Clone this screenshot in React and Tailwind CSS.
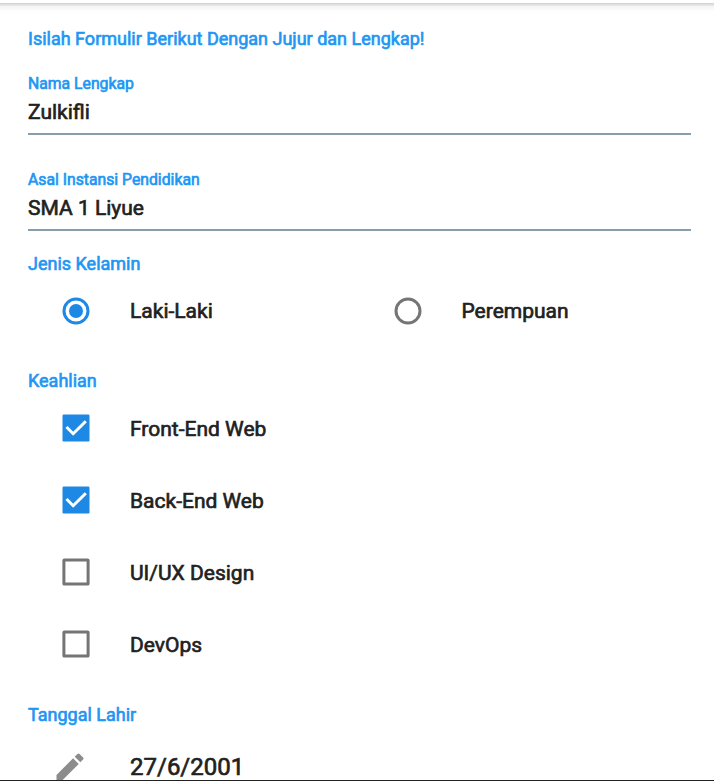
const font = "font-['Roboto',sans-serif]";

function Label({ children, className = "" }) {
  return <div className={`whitespace-nowrap text-[#2196f3] ${className}`}>{children}</div>;
}

function Field({ label, value }) {
  return (
    <div className="h-[62px] border-b-2 border-[#879da9]">
      <Label className="h-[22px] text-[15.75px] leading-[22px]">{label}</Label>
      <div className="pt-[3px] text-[21px] leading-[28px]">{value}</div>
    </div>
  );
}

function Radio({ label, checked }) {
  return (
    <div className="flex w-1/2 items-center">
      <svg className="ml-[30px] h-9 w-9 shrink-0" viewBox="0 0 36 36">
        <circle cx="18" cy="18" r="12" fill="none" stroke={checked ? "#1e88e5" : "#757575"} strokeWidth="3" />
        {checked && <circle cx="18" cy="18" r="7" fill="#1e88e5" />}
      </svg>
      <span className="ml-9 text-[21px] leading-7">{label}</span>
    </div>
  );
}

function Check({ label, checked }) {
  return (
    <div className="flex h-[72px] items-center">
      <svg className="mb-[2px] ml-[30px] h-9 w-9 shrink-0" viewBox="0 0 36 36">
        {checked ? (
          <>
            <rect x="4.500" y="4.500" width="27" height="27" rx="1.200" fill="#1e88e5" />
            <path d="M8.500 17l6.700 6.700L27.800 11.200" fill="none" stroke="white" strokeWidth="3" />
          </>
        ) : (
          <rect x="5.900" y="5.900" width="24.200" height="24.200" rx="0.400" fill="none" stroke="#757575" strokeWidth="3" />
        )}
      </svg>
      <span className="ml-9 text-[21px] leading-7">{label}</span>
    </div>
  );
}

export default function App() {
  return (
    <div className={`h-[781px] w-[714px] overflow-hidden border-b border-[#222] bg-white text-[#212121] font-normal [-webkit-text-stroke:0.650px_currentColor] ${font}`}>
      <div className="h-[3px] bg-white" />
      <div className="h-[9px] bg-linear-to-b from-[#d0d0d0] via-[#f5f5f5] via-40% to-white" />
      <main className="pl-7 pr-[23px] pt-[15px]">
        <Label className="h-[46px] text-[18px] leading-6">Isilah Formulir Berikut Dengan Jujur dan Lengkap!</Label>
        <Field label="Nama Lengkap" value="Zulkifli" />
        <div className="h-[34px]" />
        <Field label="Asal Instansi Pendidikan" value="SMA 1 Liyue" />
        <Label className="mt-[21px] text-[18px] leading-6">Jenis Kelamin</Label>
        <div className="flex h-[70px] items-center"><Radio label="Laki-Laki" checked /><Radio label="Perempuan" /></div>
        <Label className="mt-[23px] text-[18px] leading-6">Keahlian</Label>
        <Check label="Front-End Web" checked />
        <Check label="Back-End Web" checked />
        <Check label="UI/UX Design" />
        <Check label="DevOps" />
        <Label className="mt-[22px] text-[18px] leading-6">Tanggal Lahir</Label>
        <div className="mt-[22px] flex h-9 items-center">
          <svg className="ml-6 h-9 w-9" viewBox="0 0 24 24" fill="#8c8c8c"><path d="M3 17.250V21h3.750L17.810 9.940l-3.750-3.750L3 17.250zM20.710 7.040a1 1 0 0 0 0-1.410l-2.340-2.340a1 1 0 0 0-1.410 0l-1.830 1.830 3.750 3.750 1.830-1.830z" /></svg>
          <span className="ml-[42px] text-[24px] leading-8">27/6/2001</span>
        </div>
      </main>
    </div>
  );
}
